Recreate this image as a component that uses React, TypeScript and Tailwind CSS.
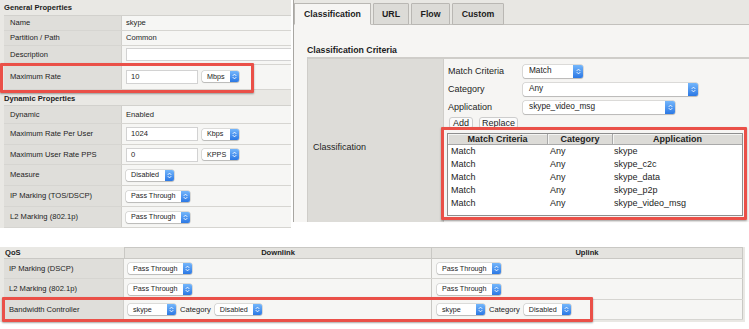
import type { ReactNode } from 'react';

const SANS = "font-['Liberation_Sans',Arial,sans-serif]";

function Arrows() {
  return (
    <svg width="5" height="7" viewBox="0 0 5 7" fill="none" stroke="white" strokeWidth="0.9" strokeLinecap="round" strokeLinejoin="round">
      <path d="M1 2.6 2.5 1.1 4 2.6" />
      <path d="M1 4.4 2.5 5.9 4 4.4" />
    </svg>
  );
}

// mac style popup button
function Popup({ text, className, big }: { text: string; className: string; big?: boolean }) {
  return (
    <div
      className={`${className} ${big ? 'h-[13px] text-[8.25px]' : 'h-[11px] text-[7.2px]'} flex items-center bg-white rounded-[2px] shadow-[0_0_0_0.5px_rgba(0,0,0,0.22),0_1px_1px_rgba(0,0,0,0.15)] shrink-0`}
    >
      <span className={`flex-1 leading-none ${big ? 'pl-[6px]' : 'pl-[5px]'}`}>{text}</span>
      <span className={`h-full ${big ? 'w-[10px]' : 'w-[9px]'} rounded-r-[2px] bg-gradient-to-b from-[#74b6fb] to-[#2b78e4] flex items-center justify-center`}>
        <Arrows />
      </span>
    </div>
  );
}

function Field({ value }: { value: string }) {
  return (
    <div className="w-[72px] h-[14px] bg-white border border-[#d2d2d2] pl-[4px] flex items-center leading-none shrink-0">
      {value}
    </div>
  );
}

function PropRow({ label, h, children }: { label: string; h: string; children: ReactNode }) {
  return (
    <div className={`flex ${h} border-b border-[#d6d5d1]`}>
      <div className="w-[118px] bg-[#dfdeda] pl-[6px] flex items-center border-r border-[#d0cfcb] leading-none">{label}</div>
      <div className="flex-1 bg-[#f6f6f4] pl-[4px] flex items-center gap-[4px] leading-none">{children}</div>
    </div>
  );
}

function LeftPanel() {
  return (
    <div className="w-[291px] h-[228px] bg-[#e9e8e4] pl-[4px] text-[7.6px] flex flex-col overflow-hidden shrink-0">
      <div className="h-[17px] flex items-center font-bold leading-none pt-[1px]">General Properties</div>
      <div className="border-t border-[#d2d1cd]">
        <PropRow label="Name" h="h-[15px]"><span>skype</span></PropRow>
        <PropRow label="Partition / Path" h="h-[15px]"><span>Common</span></PropRow>
        <PropRow label="Description" h="h-[19px]">
          <div className="h-[13px] flex-1 bg-white border border-r-0 border-[#d2d2d2]" />
        </PropRow>
        <PropRow label="Maximum Rate" h="h-[25px]">
          <Field value="10" />
          <Popup text="Mbps" className="w-[37px]" />
        </PropRow>
      </div>
      <div className="h-[17px] flex items-end pb-[2px] font-bold leading-none">Dynamic Properties</div>
      <div className="border-t border-[#d2d1cd]">
        <PropRow label="Dynamic" h="h-[18px]"><span>Enabled</span></PropRow>
        <PropRow label="Maximum Rate Per User" h="h-[21px]">
          <Field value="1024" />
          <Popup text="Kbps" className="w-[37px]" />
        </PropRow>
        <PropRow label="Maximum User Rate PPS" h="h-[20px]">
          <Field value="0" />
          <Popup text="KPPS" className="w-[37px]" />
        </PropRow>
        <PropRow label="Measure" h="h-[21px]"><Popup text="Disabled" className="w-[48px]" /></PropRow>
        <PropRow label="IP Marking (TOS/DSCP)" h="h-[21px]"><Popup text="Pass Through" className="w-[64px]" /></PropRow>
        <PropRow label="L2 Marking (802.1p)" h="h-[21px]"><Popup text="Pass Through" className="w-[64px]" /></PropRow>
      </div>
    </div>
  );
}

function Tab({ children, w, active }: { children: ReactNode; w: string; active?: boolean }) {
  return (
    <div
      className={`${w} h-[22px] -mb-px flex items-center justify-center font-bold text-[8.75px] leading-none border border-[#b9b7b3] rounded-t-[1px] ${
        active ? 'bg-[#f6f5f3] border-b-[#f6f5f3]' : 'bg-[#dcdbd7]'
      }`}
    >
      {children}
    </div>
  );
}

const ENTRIES = ['skype', 'skype_c2c', 'skype_data', 'skype_p2p', 'skype_video_msg'];

function RightPanel() {
  return (
    <div className="ml-[2px] flex-1 h-[222px] border-l border-[#a8a6a2] bg-[#f6f5f3] flex flex-col text-[9px] leading-none">
      <div className="h-[25px] shrink-0 bg-[#e8e7e3] border-b border-[#c3c1bd] flex items-end gap-[2px]">
        <Tab w="w-[77px]" active>Classification</Tab>
        <Tab w="w-[36px]">URL</Tab>
        <Tab w="w-[39px]">Flow</Tab>
        <Tab w="w-[52px]">Custom</Tab>
      </div>
      <div className="flex-1 flex flex-col pl-[13px]">
        <div className="h-[32px] flex items-end pb-[2px] font-bold text-[8.75px]">Classification Criteria</div>
        <div className="flex-1 flex border-t-2 border-l border-[#cfcdc9]">
          <div className="w-[136px] bg-[#dddcd8] flex items-center pl-[5px] pt-[14px] border-r border-[#cfcdc9]">Classification</div>
          <div className="flex-1 pt-[3px]">
            <div className="h-[18px] flex items-center pl-[4px]">
              <span className="w-[75px]">Match Criteria</span>
              <Popup big text="Match" className="w-[60px]" />
            </div>
            <div className="h-[18px] flex items-center pl-[4px]">
              <span className="w-[75px]">Category</span>
              <Popup big text="Any" className="w-[175px]" />
            </div>
            <div className="h-[18px] flex items-center pl-[4px]">
              <span className="w-[75px]">Application</span>
              <Popup big text="skype_video_msg" className="w-[152px]" />
            </div>
            <div className="h-[14px] flex items-center gap-[6px] pl-[5px]">
              <div className="w-[24px] h-[12px] flex items-center justify-center bg-[#fbfbfb] border border-[#cdcdcd] rounded-[3px]">Add</div>
              <div className="w-[39px] h-[12px] flex items-center justify-center bg-[#fbfbfb] border border-[#cdcdcd] rounded-[3px]">Replace</div>
            </div>
            <div className="mt-[3px] ml-[3px] w-[296px] h-[83px] bg-white border border-[#8e8e8e]">
              <div className="flex h-[11px] bg-[#dcdbd7] border-b border-[#a9a9a9] font-bold">
                <div className="w-[100px] flex items-center justify-center border-r border-[#a9a9a9] shadow-[inset_1px_1px_0_#f4f4f2]">Match Criteria</div>
                <div className="w-[65px] flex items-center justify-center border-r border-[#a9a9a9] shadow-[inset_1px_1px_0_#f4f4f2]">Category</div>
                <div className="flex-1 flex items-center justify-center shadow-[inset_1px_1px_0_#f4f4f2]">Application</div>
              </div>
              {ENTRIES.map((app) => (
                <div key={app} className="flex h-[13px] items-center">
                  <span className="w-[100px] pl-[3px]">Match</span>
                  <span className="w-[65px] pl-[2px]">Any</span>
                  <span className="flex-1 pl-[1px]">{app}</span>
                </div>
              ))}
            </div>
          </div>
        </div>
      </div>
    </div>
  );
}

function QosRow({ label, h, down, up }: { label: string; h: string; down: ReactNode; up: ReactNode }) {
  return (
    <div className={`flex ${h} border-b border-[#d6d5d1]`}>
      <div className="w-[120px] bg-[#dfdeda] pl-[5px] flex items-center border-r border-[#d0cfcb]">{label}</div>
      <div className="w-[308px] bg-[#f6f6f4] pl-[4px] flex items-center gap-[4px] border-r border-[#c9c8c4]">{down}</div>
      <div className="flex-1 bg-[#f6f6f4] pl-[5px] flex items-center gap-[4px] border-r border-[#c9c8c4]">{up}</div>
    </div>
  );
}

function Bandwidth() {
  return (
    <>
      <Popup text="skype" className="w-[48px]" />
      <span>Category</span>
      <Popup text="Disabled" className="w-[47px]" />
    </>
  );
}

function BottomPanel() {
  return (
    <div className="mt-[19px] w-[745px] h-[75px] bg-[#e9e8e4] text-[7.6px] leading-none flex flex-col pl-[4px] pr-[2px]">
      <div className="flex h-[11px] font-bold">
        <div className="w-[120px] flex items-center pl-[1px]">QoS</div>
        <div className="w-[308px] flex items-center justify-center bg-[#e4e3df] border-x border-t border-[#c9c8c4]">Downlink</div>
        <div className="flex-1 flex items-center justify-center bg-[#e4e3df] border-r border-t border-[#c9c8c4]">Uplink</div>
      </div>
      <div className="border-t border-[#c9c8c4]">
        <QosRow
          label="IP Marking (DSCP)"
          h="h-[20px]"
          down={<Popup text="Pass Through" className="w-[64px]" />}
          up={<Popup text="Pass Through" className="w-[64px]" />}
        />
        <QosRow
          label="L2 Marking (802.1p)"
          h="h-[21px]"
          down={<Popup text="Pass Through" className="w-[64px]" />}
          up={<Popup text="Pass Through" className="w-[64px]" />}
        />
        <QosRow label="Bandwidth Controller" h="h-[20px]" down={<Bandwidth />} up={<Bandwidth />} />
      </div>
    </div>
  );
}

function Highlight({ className }: { className: string }) {
  return (
    <div
      className={`absolute ${className} border-[3px] border-[#ea5048] rounded-[1px] shadow-[0_1px_2px_rgba(0,0,0,0.35)] pointer-events-none`}
    />
  );
}

export default function App() {
  return (
    <div className={`w-[749px] h-[329px] bg-white relative overflow-hidden text-[#1d1d1d] ${SANS}`}>
      <div className="flex h-[228px]">
        <LeftPanel />
        <RightPanel />
      </div>
      <BottomPanel />
      <Highlight className="left-0 top-[63px] w-[254px] h-[30px]" />
      <Highlight className="left-[441px] top-[127px] w-[306px] h-[93px]" />
      <Highlight className="left-[2px] top-[297px] w-[591px] h-[25px]" />
    </div>
  );
}
